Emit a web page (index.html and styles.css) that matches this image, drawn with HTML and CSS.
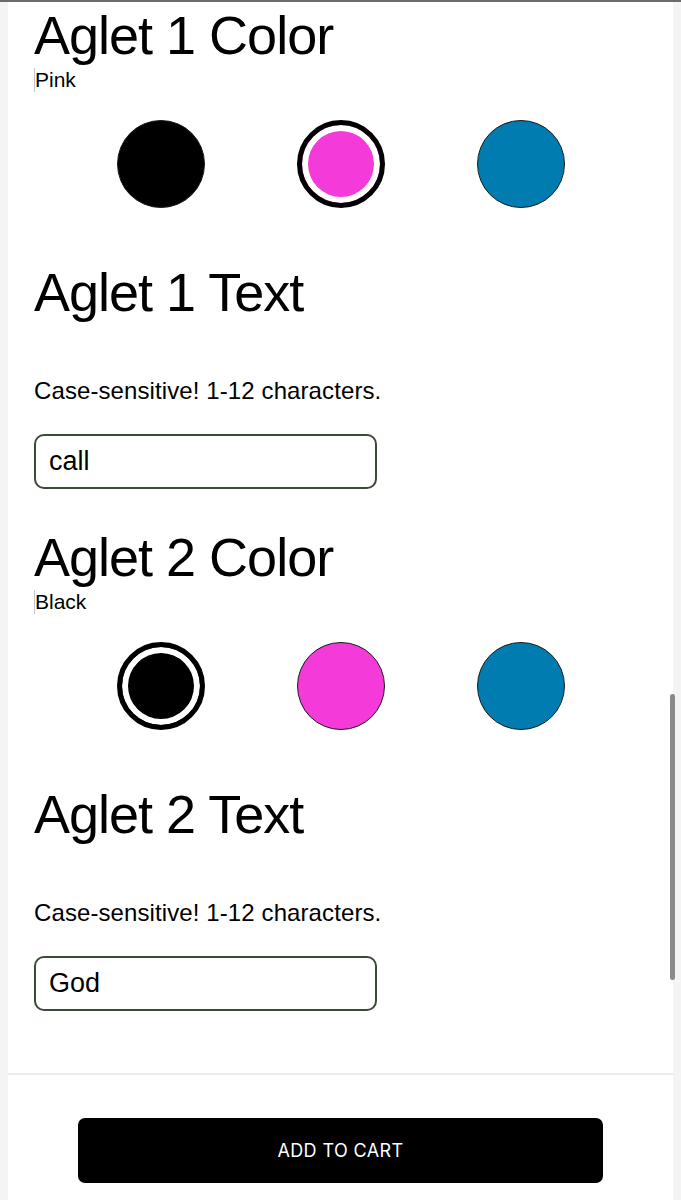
FILE: index.html
```html
<!DOCTYPE html>
<html lang="en">
<head>
    <meta charset="UTF-8">
    <meta name="viewport" content="width=device-width, initial-scale=1.0">
    <title>Customize Laces</title>
    <link rel="stylesheet" href="styles.css">
</head>
<body>
    <div class="page">
        <div class="options">
            <section class="option color-option">
                <h2 class="option-title">Aglet 1 Color</h2>
                <span class="color-name">Pink</span>
                <div class="swatches">
                    <button type="button" class="swatch swatch-black" aria-label="Black"></button>
                    <button type="button" class="swatch swatch-pink selected" aria-label="Pink"></button>
                    <button type="button" class="swatch swatch-blue" aria-label="Blue"></button>
                </div>
            </section>
            <section class="option text-option">
                <h2 class="option-title">Aglet 1 Text</h2>
                <p class="help">Case-sensitive! 1-12 characters.</p>
                <input type="text" class="text-input" value="call" maxlength="12">
            </section>
            <section class="option color-option">
                <h2 class="option-title">Aglet 2 Color</h2>
                <span class="color-name">Black</span>
                <div class="swatches">
                    <button type="button" class="swatch swatch-black selected" aria-label="Black"></button>
                    <button type="button" class="swatch swatch-pink" aria-label="Pink"></button>
                    <button type="button" class="swatch swatch-blue" aria-label="Blue"></button>
                </div>
            </section>
            <section class="option text-option">
                <h2 class="option-title">Aglet 2 Text</h2>
                <p class="help">Case-sensitive! 1-12 characters.</p>
                <input type="text" class="text-input" value="God" maxlength="12">
            </section>
        </div>
        <div class="cart-bar">
            <button type="button" class="add-to-cart">ADD TO CART</button>
        </div>
    </div>
    <div class="scroll-thumb"></div>
</body>
</html>
```

FILE: styles.css
```css
body {
    margin: 0;
    padding: 0;
    font-family: "Liberation Sans", Arial, sans-serif;
    color: #000;
    background-color: #f4f4f4;
    border-top: 2px solid #6b6b6b;
}
.page {
    margin: 0 8px;
    background-color: #fff;
    min-height: 1198px;
}
.options {
    padding: 6px 26px 62px;
}
.option-title {
    margin: 0;
    font-size: 54px;
    line-height: 54px;
    font-weight: 400;
    letter-spacing: -1px;
}
.color-option + .text-option .option-title {
    margin-top: 57px;
}
.text-option + .color-option .option-title {
    margin-top: 41px;
}
.color-name {
    display: block;
    width: fit-content;
    margin-top: 6px;
    font-size: 21px;
    line-height: 24px;
    border-left: 1px solid #c6c6c6;
}
.swatches {
    display: flex;
    justify-content: center;
    gap: 92px;
    margin-top: 28px;
}
.swatch {
    width: 88px;
    height: 88px;
    box-sizing: border-box;
    padding: 0;
    border-radius: 50%;
    border: 1px solid #1a1a1a;
    cursor: pointer;
}
.swatch-black {
    background-color: #000;
}
.swatch-pink {
    background-color: #f43ad9;
}
.swatch-blue {
    background-color: #007cb0;
}
.swatch.selected {
    border: 5px solid #000;
    box-shadow: inset 0 0 0 6px #fff;
}
.help {
    margin: 58px 0 0;
    font-size: 24px;
    line-height: 28px;
    letter-spacing: 0.1px;
}
.text-input {
    display: block;
    margin-top: 29px;
    width: 343px;
    height: 55px;
    box-sizing: border-box;
    padding: 0 13px;
    border: 2px solid #3c4a3a;
    border-radius: 10px;
    font-family: "Liberation Sans", Arial, sans-serif;
    font-size: 27px;
    color: #000;
    outline: none;
}
.cart-bar {
    display: flex;
    justify-content: center;
    padding: 43px 0 30px;
    border-top: 2px solid #ececec;
}
.add-to-cart {
    width: 525px;
    height: 65px;
    border: none;
    border-radius: 7px;
    background-color: #000;
    color: #fff;
    font-family: Inter, "Liberation Sans", sans-serif;
    font-size: 18px;
    letter-spacing: 0.4px;
    cursor: pointer;
}
.scroll-thumb {
    position: fixed;
    top: 694px;
    left: 670px;
    width: 5px;
    height: 286px;
    border-radius: 3px;
    background-color: #8a8a8a;
}
```
